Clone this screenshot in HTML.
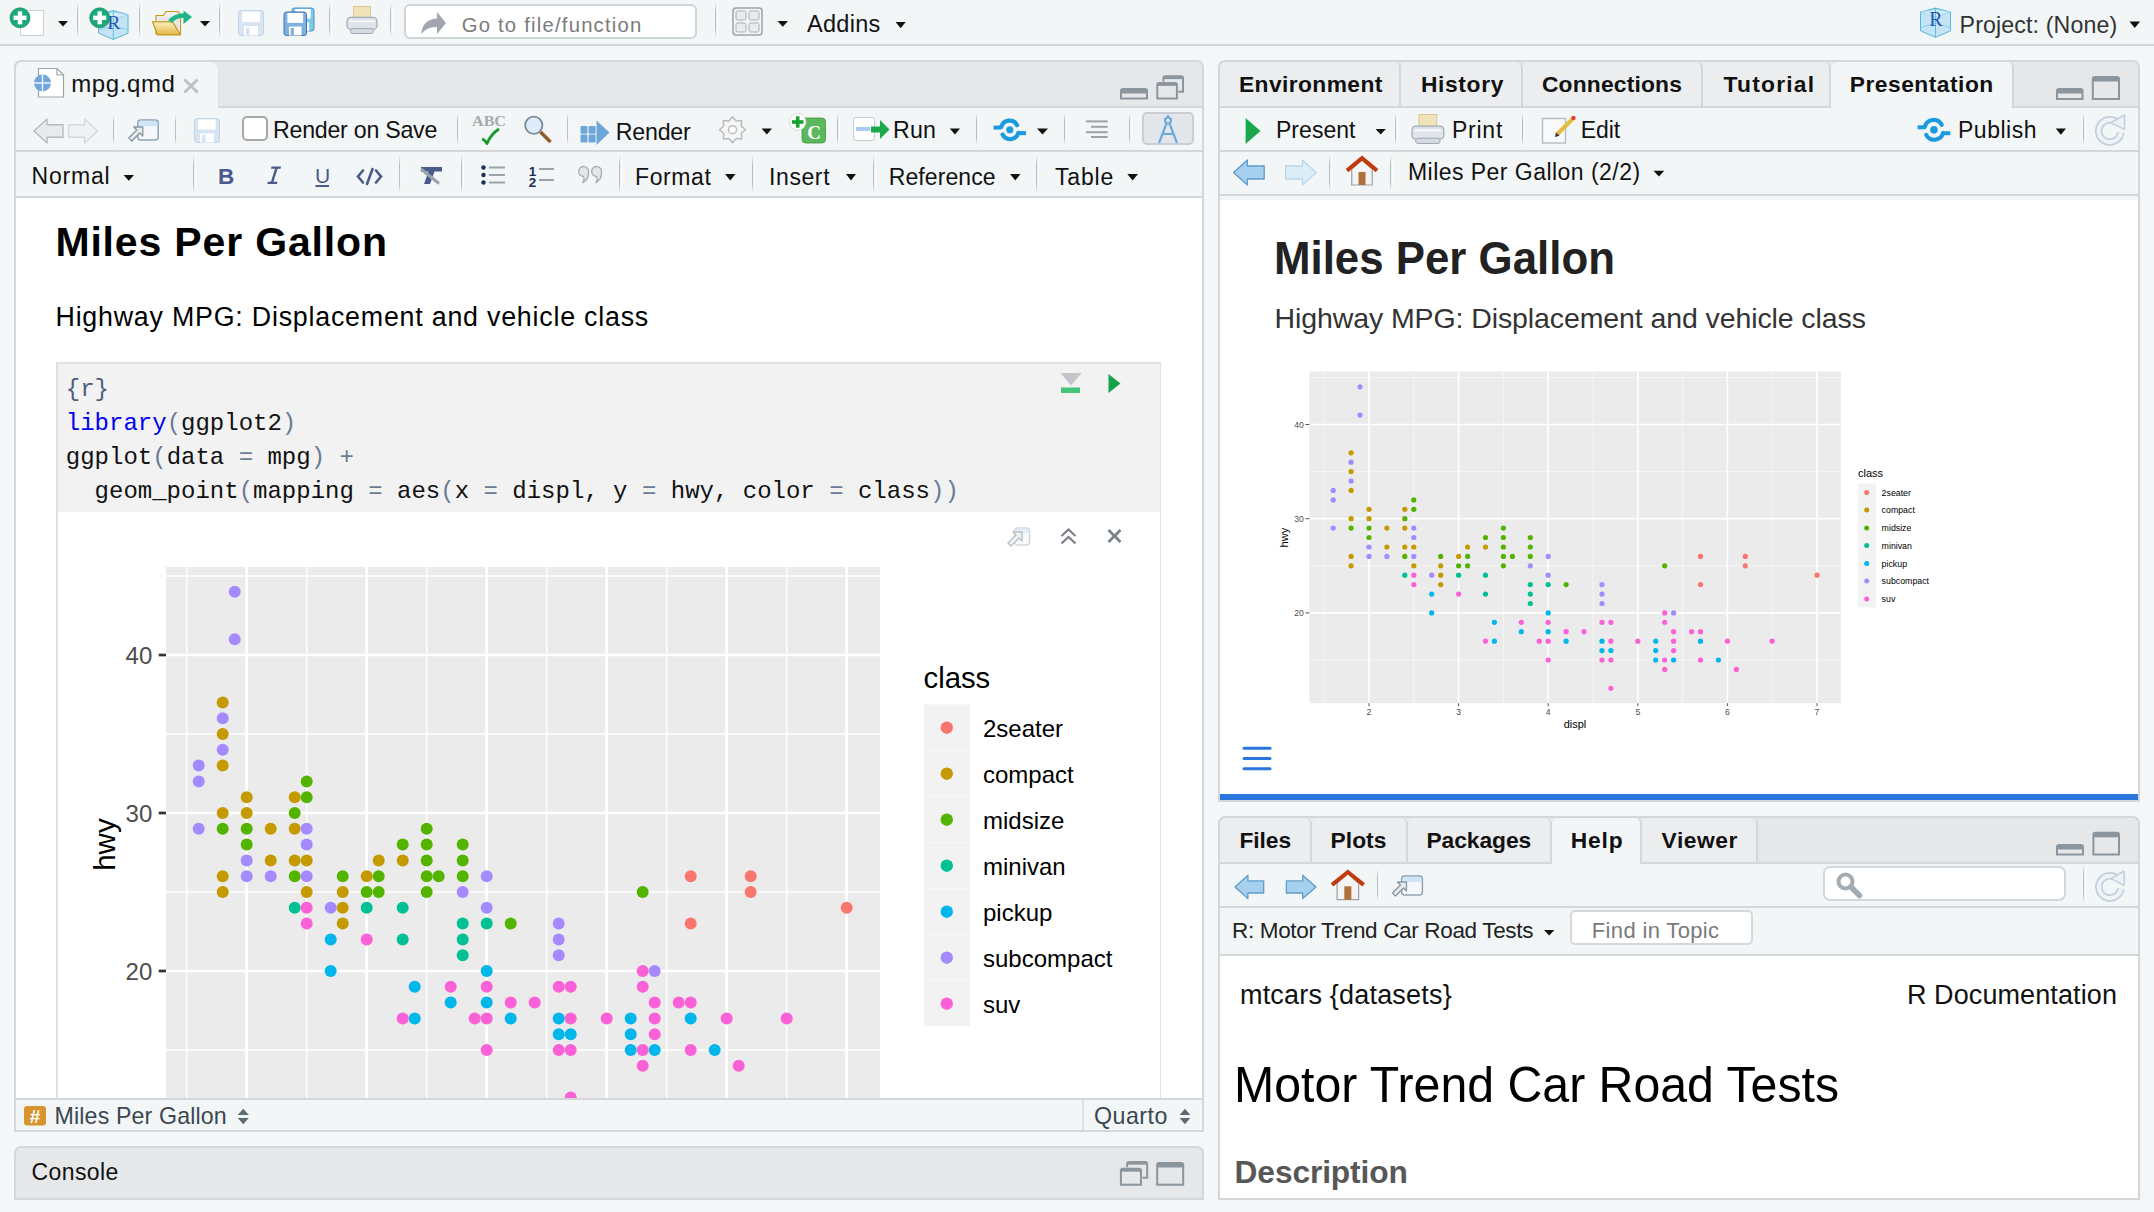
<!DOCTYPE html>
<html><head><meta charset="utf-8"><title>RStudio</title>
<style>
html,body{margin:0;padding:0;width:2154px;height:1212px;overflow:hidden;font-family:"Liberation Sans",sans-serif;}
</style></head><body>
<div style="position:absolute;left:0px;top:0px;width:2154px;height:1212px;background:#f5f6f8;"></div><div style="position:absolute;left:0px;top:0px;width:2154px;height:44px;background:#f3f6f7;"></div><div style="position:absolute;left:0px;top:44px;width:2154px;height:2px;background:#d3d7da;"></div><div style="position:absolute;left:14px;top:60px;width:1186px;height:1068px;border:2px solid #d3d7da;border-radius:7px 7px 0 0;background:#e5e7e9;overflow:hidden"></div><div style="position:absolute;left:16px;top:108px;width:1186px;height:42px;background:#f3f6f7;"></div><div style="position:absolute;left:16px;top:150px;width:1186px;height:2px;background:#d3d7da;"></div><div style="position:absolute;left:16px;top:152px;width:1186px;height:44px;background:#f3f6f7;"></div><div style="position:absolute;left:16px;top:196px;width:1186px;height:2px;background:#d3d7da;"></div><div style="position:absolute;left:16px;top:198px;width:1186px;height:900px;background:#fff;"></div><div style="position:absolute;left:16px;top:1098px;width:1186px;height:2px;background:#d3d7da;"></div><div style="position:absolute;left:16px;top:1100px;width:1186px;height:30px;background:#f3f6f7;"></div><div style="position:absolute;left:1082px;top:1100px;width:2px;height:30px;background:#dde1e4;"></div><div style="position:absolute;left:218px;top:106px;width:984px;height:2px;background:#d3d7da;"></div><div style="position:absolute;left:16px;top:62px;width:202px;height:46px;background:#f3f6f7;border-radius:6px 7px 0 0;box-shadow:1px 0 0 #dde0e3"></div><div style="position:absolute;left:14px;top:1146px;width:1186px;height:50px;border:2px solid #d3d7da;border-radius:7px 7px 0 0;background:#e5e7e9;overflow:hidden"></div><div style="position:absolute;left:1218px;top:60px;width:918px;height:738px;border:2px solid #d3d7da;border-radius:7px 7px 0 0;background:#e5e7e9;overflow:hidden"></div><div style="position:absolute;left:1220px;top:108px;width:918px;height:42px;background:#f3f6f7;"></div><div style="position:absolute;left:1220px;top:150px;width:918px;height:2px;background:#d3d7da;"></div><div style="position:absolute;left:1220px;top:152px;width:918px;height:42px;background:#f3f6f7;"></div><div style="position:absolute;left:1220px;top:194px;width:918px;height:2px;background:#d3d7da;"></div><div style="position:absolute;left:1220px;top:196px;width:918px;height:4px;background:#f3f6f7;"></div><div style="position:absolute;left:1220px;top:200px;width:918px;height:594px;background:#fff;"></div><div style="position:absolute;left:1220px;top:794px;width:918px;height:6px;background:#2b76dc;"></div><div style="position:absolute;left:1220px;top:106px;width:918px;height:2px;background:#d3d7da;"></div><div style="position:absolute;left:1220px;top:62px;width:179px;height:44px;background:#ebedef;border-right:2px solid #d3d7da;border-radius:6px 6px 0 0"></div><div style="position:absolute;left:1401px;top:62px;width:120px;height:44px;background:#ebedef;border-right:2px solid #d3d7da;border-radius:6px 6px 0 0"></div><div style="position:absolute;left:1523px;top:62px;width:178px;height:44px;background:#ebedef;border-right:2px solid #d3d7da;border-radius:6px 6px 0 0"></div><div style="position:absolute;left:1703px;top:62px;width:126px;height:44px;background:#ebedef;border-right:2px solid #d3d7da;border-radius:6px 6px 0 0"></div><div style="position:absolute;left:1831px;top:62px;width:181px;height:46px;background:#f3f6f7;border-right:2px solid #d3d7da;border-radius:6px 6px 0 0"></div><div style="position:absolute;left:1218px;top:816px;width:918px;height:380px;border:2px solid #d3d7da;border-radius:7px 7px 0 0;background:#e5e7e9;overflow:hidden"></div><div style="position:absolute;left:1220px;top:864px;width:918px;height:42px;background:#f3f6f7;"></div><div style="position:absolute;left:1220px;top:906px;width:918px;height:2px;background:#d3d7da;"></div><div style="position:absolute;left:1220px;top:908px;width:918px;height:46px;background:#f3f6f7;"></div><div style="position:absolute;left:1220px;top:954px;width:918px;height:2px;background:#d3d7da;"></div><div style="position:absolute;left:1220px;top:956px;width:918px;height:242px;background:#fff;"></div><div style="position:absolute;left:1220px;top:862px;width:918px;height:2px;background:#d3d7da;"></div><div style="position:absolute;left:1220px;top:818px;width:90px;height:44px;background:#ebedef;border-right:2px solid #d3d7da;border-radius:6px 6px 0 0"></div><div style="position:absolute;left:1312px;top:818px;width:94px;height:44px;background:#ebedef;border-right:2px solid #d3d7da;border-radius:6px 6px 0 0"></div><div style="position:absolute;left:1408px;top:818px;width:142px;height:44px;background:#ebedef;border-right:2px solid #d3d7da;border-radius:6px 6px 0 0"></div><div style="position:absolute;left:1552px;top:818px;width:88px;height:46px;background:#f3f6f7;border-right:2px solid #d3d7da;border-radius:6px 6px 0 0"></div><div style="position:absolute;left:1642px;top:818px;width:114px;height:44px;background:#ebedef;border-right:2px solid #d3d7da;border-radius:6px 6px 0 0"></div><div style="position:absolute;left:404px;top:4px;width:289px;height:31px;background:#fff;border:2px solid #cfd4d8;border-radius:6px"></div><div style="position:absolute;left:1570px;top:910px;width:179px;height:31px;background:#fff;border:2px solid #d3d8dc;border-radius:5px"></div><div style="position:absolute;left:1823px;top:866px;width:239px;height:31px;background:#fff;border:2px solid #d3d8dc;border-radius:7px"></div><div style="position:absolute;left:242px;top:116px;width:22px;height:21px;background:#fff;border:2px solid #a8a8a8;border-radius:5px"></div><div style="position:absolute;left:1142px;top:112px;width:48px;height:29px;background:#e3e7eb;border:2px solid #c8ced4;border-radius:5px"></div><div style="position:absolute;left:56px;top:362px;width:1105px;height:2px;background:#e2e2e2;"></div><div style="position:absolute;left:56px;top:364px;width:1105px;height:148px;background:#f2f2f2;"></div><div style="position:absolute;left:56px;top:362px;width:1.5px;height:736px;background:#e0e0e0;"></div><div style="position:absolute;left:1160px;top:364px;width:1px;height:734px;background:#e3e3e3;"></div>
<svg style="position:absolute;left:0;top:0" width="2154" height="1212" viewBox="0 0 2154 1212" font-family="Liberation Sans">
<defs><linearGradient id="sg" x1="0" y1="0" x2="0" y2="1"><stop offset="0" stop-color="#b9bdc1" stop-opacity="0"/><stop offset="0.25" stop-color="#b9bdc1"/><stop offset="0.75" stop-color="#b9bdc1"/><stop offset="1" stop-color="#b9bdc1" stop-opacity="0"/></linearGradient><linearGradient id="sw" x1="0" y1="0" x2="0" y2="1"><stop offset="0" stop-color="#fff" stop-opacity="0"/><stop offset="0.25" stop-color="#fff"/><stop offset="0.75" stop-color="#fff"/><stop offset="1" stop-color="#fff" stop-opacity="0"/></linearGradient></defs><rect x="20.5" y="10.5" width="23" height="25" fill="#fff" stroke="#c9d0d6" stroke-width="1"/><circle cx="20" cy="17.8" r="10" fill="#1aa978" stroke="#12865c" stroke-width="0.7"/><rect x="13.5" y="15.600000000000001" width="13" height="4.4" fill="#fff"/><rect x="17.8" y="11.3" width="4.4" height="13" fill="#fff"/><polygon points="58,21 68,21 63.0,26.5" fill="#111"/><rect x="77" y="3" width="1.4" height="34" fill="url(#sg)"/><rect x="78.4" y="3" width="1.2" height="34" fill="url(#sw)"/><polygon points="113.3,10.6 128,14.646 128,33.141999999999996 113.3,39.5 98.6,33.141999999999996 98.6,14.646" fill="#c4e4f6" stroke="#58b6d8" stroke-width="1"/><polygon points="98.6,14.646 113.3,12.045 128,14.646 113.3,19.27" fill="#d5ecf9" stroke="#8fd0ea" stroke-width="0.7"/><polyline points="98.6,29.963 113.3,25.628 128,29.963" fill="none" stroke="#7cc6e4" stroke-width="0.8"/><line x1="113.3" y1="10.6" x2="113.3" y2="39.5" stroke="#58b6d8" stroke-width="0.9"/><text x="113.8" y="28.807000000000002" font-family="Liberation Serif" font-size="19.652" fill="#2457b0" text-anchor="middle">R</text><circle cx="99.7" cy="17.8" r="10" fill="#1aa978" stroke="#12865c" stroke-width="0.7"/><rect x="93.2" y="15.600000000000001" width="13" height="4.4" fill="#fff"/><rect x="97.5" y="11.3" width="4.4" height="13" fill="#fff"/><rect x="139" y="3" width="1.4" height="34" fill="url(#sg)"/><rect x="140.4" y="3" width="1.2" height="34" fill="url(#sw)"/><defs><linearGradient id="fg" x1="0" y1="0" x2="0" y2="1"><stop offset="0" stop-color="#fbf3c4"/><stop offset="1" stop-color="#e2b646"/></linearGradient></defs><path d="M 156 15.5 L 163.5 15.5 L 166 11.5 L 178 11.5 L 180.5 14.5 L 180.5 34 L 156 34 Z" fill="#f0f0f0" stroke="#c99a1c" stroke-width="1.2"/><rect x="158" y="16.5" width="21" height="12" fill="#e6e6e6"/><polygon points="152.5,21.8 172.5,21.8 180.5,34.8 157.5,34.8" fill="url(#fg)" stroke="#c49818" stroke-width="1.2" stroke-linejoin="round"/><path d="M 170 21.5 Q 175 15.5 184 15.5" fill="none" stroke="#1db58a" stroke-width="4.5"/><polygon points="183.5,10.5 192,17 183.5,24" fill="#1db58a"/><polygon points="200,21 210,21 205.0,26.5" fill="#111"/><rect x="219" y="3" width="1.4" height="34" fill="url(#sg)"/><rect x="220.4" y="3" width="1.2" height="34" fill="url(#sw)"/><rect x="238.5" y="10.5" width="25.0" height="25.0" rx="2.5" fill="#d7e5f3" stroke="#c2d5e8" stroke-width="1"/><rect x="242.25" y="11.5" width="17.5" height="10.5" fill="#fff"/><rect x="244.0" y="26.0" width="14.000000000000002" height="9.5" fill="#fff"/><rect x="246.0" y="27.5" width="3.5000000000000004" height="7.5" fill="#d7e5f3"/><rect x="292" y="8" width="22" height="23" rx="2.5" fill="#7ec8ea" stroke="#4a8fc0" stroke-width="1"/><rect x="295.3" y="9" width="15.399999999999999" height="9.66" fill="#fff"/><rect x="296.84" y="22.259999999999998" width="12.32" height="8.74" fill="#fff"/><rect x="298.6" y="23.64" width="3.08" height="6.8999999999999995" fill="#7ec8ea"/><rect x="284" y="12" width="22.5" height="23.5" rx="2.5" fill="#7fb0e0" stroke="#3f75b0" stroke-width="1"/><rect x="287.375" y="13" width="15.749999999999998" height="9.87" fill="#fff"/><rect x="288.95" y="26.57" width="12.600000000000001" height="8.93" fill="#fff"/><rect x="290.75" y="27.98" width="3.1500000000000004" height="7.05" fill="#7fb0e0"/><rect x="329" y="3" width="1.4" height="34" fill="url(#sg)"/><rect x="330.4" y="3" width="1.2" height="34" fill="url(#sw)"/><rect x="353.6" y="6.5" width="16.8" height="13.5" fill="#f1e3b8" stroke="#d8c89a" stroke-width="1"/><rect x="347" y="17.3" width="30" height="12.15" rx="4" fill="#dfe3ea" stroke="#a2a9b2" stroke-width="1.2"/><rect x="350.6" y="28.639999999999997" width="22.8" height="4.859999999999999" rx="2" fill="#d5dae2" stroke="#a2a9b2" stroke-width="1"/><line x1="349.4" y1="21.35" x2="374.6" y2="21.35" stroke="#fff" stroke-width="1.5"/><rect x="390" y="3" width="1.4" height="34" fill="url(#sg)"/><rect x="391.4" y="3" width="1.2" height="34" fill="url(#sw)"/><path d="M 421 34 Q 423 19 437 18.5 L 437 12 L 446 23 L 437 34 L 437 27 Q 428 26 421 34 Z" fill="#9fa6b0"/><rect x="715" y="3" width="1.4" height="34" fill="url(#sg)"/><rect x="716.4" y="3" width="1.2" height="34" fill="url(#sw)"/><rect x="733" y="8" width="29" height="27" rx="3" fill="#f3f4f6" stroke="#9aa3ad" stroke-width="1.5"/><rect x="736" y="11" width="10" height="9" rx="1.5" fill="#e8eaed" stroke="#a8b0b8" stroke-width="1"/><rect x="749" y="11" width="10" height="9" rx="1.5" fill="#e8eaed" stroke="#a8b0b8" stroke-width="1"/><rect x="736" y="23" width="10" height="9" rx="1.5" fill="#e8eaed" stroke="#a8b0b8" stroke-width="1"/><rect x="749" y="23" width="10" height="9" rx="1.5" fill="#e8eaed" stroke="#a8b0b8" stroke-width="1"/><polygon points="777.5,21 788,21 782.75,26.7" fill="#111"/><polygon points="895.6,22 905.7,22 900.6500000000001,28.3" fill="#111"/><polygon points="1935.5,8 1950.5,12.102 1950.5,30.854 1935.5,37.3 1920.5,30.854 1920.5,12.102" fill="#c4e4f6" stroke="#58b6d8" stroke-width="1"/><polygon points="1920.5,12.102 1935.5,9.465 1950.5,12.102 1935.5,16.79" fill="#d5ecf9" stroke="#8fd0ea" stroke-width="0.7"/><polyline points="1920.5,27.631 1935.5,23.235999999999997 1950.5,27.631" fill="none" stroke="#7cc6e4" stroke-width="0.8"/><line x1="1935.5" y1="8" x2="1935.5" y2="37.3" stroke="#58b6d8" stroke-width="0.9"/><text x="1936.0" y="26.459" font-family="Liberation Serif" font-size="19.924" fill="#2457b0" text-anchor="middle">R</text><polygon points="2129.5,21.5 2140,21.5 2134.75,28" fill="#111"/><path d="M 38.5 68.5 L 57 68.5 L 63.5 75 L 63.5 97 L 38.5 97 Z" fill="#fff" stroke="#9da3a8" stroke-width="1.2"/><path d="M 57 68.5 L 57 75 L 63.5 75" fill="none" stroke="#9da3a8" stroke-width="1.2"/><circle cx="42.5" cy="83" r="8.5" fill="#6fa7dc"/><line x1="34" y1="83" x2="51" y2="83" stroke="#fff" stroke-width="1.3"/><line x1="42.5" y1="74.5" x2="42.5" y2="91.5" stroke="#fff" stroke-width="1.3"/><g stroke="#bfc1c3" stroke-width="3" stroke-linecap="square"><line x1="185.5" y1="80.5" x2="196.5" y2="91.5"/><line x1="196.5" y1="80.5" x2="185.5" y2="91.5"/></g><path d="M 1120 99.5 L 1120 91 Q 1120 88 1123 88 L 1145 88 Q 1148 88 1148 91 L 1148 99.5 Z" fill="#8b959d"/><rect x="1122" y="93.5" width="24" height="4.0" fill="#e5e7e9"/><path d="M 1162.394 92.724 L 1162.394 78.3 Q 1162.394 75.3 1165.394 75.3 L 1181 75.3 Q 1184 75.3 1184 78.3 L 1184 92.724 Z" fill="#8b959d"/><rect x="1164.394" y="79.1" width="17.605999999999995" height="11.624000000000006" fill="#e5e7e9"/><rect x="1155.8" y="81.576" width="22.606000000000037" height="17.924000000000003" fill="#e5e7e9"/><path d="M 1156.3 99.5 L 1156.3 85.076 Q 1156.3 82.076 1159.3 82.076 L 1174.906 82.076 Q 1177.906 82.076 1177.906 85.076 L 1177.906 99.5 Z" fill="#8b959d"/><rect x="1158.3" y="85.87599999999999" width="17.605999999999995" height="11.624000000000006" fill="#e5e7e9"/><polygon points="34,131.0 47.05,119 47.05,124.76 63,124.76 63,137.24 47.05,137.24 47.05,143" fill="#e9eaec" stroke="#b5b8bc" stroke-width="1.3" stroke-linejoin="round"/><polygon points="97.6,131.0 84.595,119 84.595,124.76 68.7,124.76 68.7,137.24 84.595,137.24 84.595,143" fill="#eff1f3" stroke="#d5d8dc" stroke-width="1.3" stroke-linejoin="round"/><rect x="113" y="115" width="1.4" height="30" fill="url(#sg)"/><rect x="114.4" y="115" width="1.2" height="30" fill="url(#sw)"/><g opacity="1.0"><rect x="137.8" y="120" width="20.400000000000002" height="20" rx="3" fill="#f5f8fb" stroke="#8fa3b5" stroke-width="1.5"/><rect x="138.60000000000002" y="120.8" width="18.8" height="5.5" rx="2" fill="#cfe4f7"/><polygon points="128.8,138 136.8,130 133.8,127 142.8,127 142.8,136 139.8,133 131.8,141" fill="#e8eaec" stroke="#8a96a0" stroke-width="1.3" stroke-linejoin="round"/></g><rect x="175" y="115" width="1.4" height="30" fill="url(#sg)"/><rect x="176.4" y="115" width="1.2" height="30" fill="url(#sw)"/><rect x="194.5" y="118.5" width="25.0" height="24.0" rx="2.5" fill="#d7e5f3" stroke="#c2d5e8" stroke-width="1"/><rect x="198.25" y="119.5" width="17.5" height="10.08" fill="#fff"/><rect x="200.0" y="133.38" width="14.000000000000002" height="9.120000000000001" fill="#fff"/><rect x="202.0" y="134.82" width="3.5000000000000004" height="7.199999999999999" fill="#d7e5f3"/><rect x="457" y="113" width="1.4" height="32" fill="url(#sg)"/><rect x="458.4" y="113" width="1.2" height="32" fill="url(#sw)"/><text x="472" y="126" font-family="Liberation Serif" font-weight="700" font-size="15" fill="#a5aab0" textLength="34" lengthAdjust="spacingAndGlyphs">ABC</text><path d="M 482 139 Q 484.5 139.5 487 143.5 Q 491 134 499 129" fill="none" stroke="#129a2e" stroke-width="2.8" stroke-linejoin="round"/><circle cx="533.8" cy="125.3" r="8.6" fill="#dcecfb" stroke="#7b8b98" stroke-width="1.8"/><line x1="540.5" y1="132" x2="550.5" y2="142" stroke="#8f5a26" stroke-width="3.6" stroke-linecap="butt"/><rect x="567" y="113" width="1.4" height="32" fill="url(#sg)"/><rect x="568.4" y="113" width="1.2" height="32" fill="url(#sw)"/><rect x="580.5" y="126" width="7" height="7.8" rx="1.2" fill="#6fa6da"/><rect x="588.6" y="126" width="7" height="7.8" rx="1.2" fill="#6fa6da"/><rect x="580.5" y="134.6" width="7" height="7.8" rx="1.2" fill="#6fa6da"/><rect x="588.6" y="134.6" width="7" height="7.8" rx="1.2" fill="#6fa6da"/><polygon points="596.5,120.5 609.5,132.5 596.5,145" fill="#6fa6da"/><polygon points="745.5,129.7 741.3,133.3 741.7,138.9 736.1,138.5 732.5,142.7 728.9,138.5 723.3,138.9 723.7,133.3 719.5,129.7 723.7,126.1 723.3,120.5 728.9,120.9 732.5,116.7 736.1,120.9 741.7,120.5 741.3,126.1" fill="#f6f6f6" stroke="#b9bcbf" stroke-width="1.5" stroke-linejoin="round"/><circle cx="732.5" cy="129.7" r="4" fill="#fff" stroke="#b9bcbf" stroke-width="1.5"/><polygon points="761.6,128.5 772,128.5 766.8,134.6" fill="#111"/><rect x="802" y="118" width="23.5" height="25" rx="3.5" fill="#5cb85c" stroke="#3e9a3e" stroke-width="0.8"/><text x="814" y="139" font-family="Liberation Serif" font-size="19" font-weight="700" fill="#fff" text-anchor="middle">C</text><circle cx="797.7" cy="122" r="8.3" fill="#fff" stroke="#d0d0d0" stroke-width="0.8"/><rect x="792" y="120.2" width="11.4" height="3.6" fill="#16a32a"/><rect x="795.9" y="116.3" width="3.6" height="11.4" fill="#16a32a"/><rect x="837" y="113" width="1.4" height="32" fill="url(#sg)"/><rect x="838.4" y="113" width="1.2" height="32" fill="url(#sw)"/><rect x="853.5" y="117.5" width="21" height="23" rx="2.5" fill="#fff" stroke="#c8ccd0" stroke-width="1"/><rect x="856" y="127" width="14" height="4" fill="#a9c9ee"/><rect x="871" y="126.5" width="10" height="6" fill="#1ba94c"/><polygon points="880,120 889.5,129.5 880,139" fill="#1ba94c"/><polygon points="949.8,128.5 960,128.5 954.9,134.6" fill="#111"/><rect x="976" y="113" width="1.4" height="32" fill="url(#sg)"/><rect x="977.4" y="113" width="1.2" height="32" fill="url(#sw)"/><circle cx="1009.8" cy="129.85" r="3.583439999999998" fill="#1a9be0"/><path d="M 1001.2679999999999 126.8638 A 8.531999999999996 8.531999999999996 0 0 1 1017.0522 125.1574" fill="none" stroke="#1a9be0" stroke-width="4.2" stroke-linecap="round"/><path d="M 1018.332 132.8362 A 8.531999999999996 8.531999999999996 0 0 1 1002.5477999999999 134.5426" fill="none" stroke="#1a9be0" stroke-width="4.2" stroke-linecap="round"/><rect x="993.6" y="125.584" width="7.678799999999997" height="4" fill="#1a9be0"/><rect x="1018.3212" y="131.1298" width="7.678799999999997" height="4" fill="#1a9be0"/><polygon points="1037,128.5 1048,128.5 1042.5,134.6" fill="#111"/><rect x="1064" y="113" width="1.4" height="32" fill="url(#sg)"/><rect x="1065.4" y="113" width="1.2" height="32" fill="url(#sw)"/><line x1="1086" y1="121.4" x2="1107.7" y2="121.4" stroke="#9ca2a8" stroke-width="2"/><line x1="1091" y1="126.8" x2="1107.7" y2="126.8" stroke="#9ca2a8" stroke-width="2"/><line x1="1086" y1="132.2" x2="1107.7" y2="132.2" stroke="#9ca2a8" stroke-width="2"/><line x1="1091" y1="137.0" x2="1107.7" y2="137.0" stroke="#9ca2a8" stroke-width="2"/><rect x="1129" y="113" width="1.4" height="32" fill="url(#sg)"/><rect x="1130.4" y="113" width="1.2" height="32" fill="url(#sw)"/><g stroke="#6fa8dc" stroke-width="2.2" fill="none"><circle cx="1168" cy="120.5" r="3"/><line x1="1166.5" y1="123.5" x2="1159" y2="143"/><line x1="1169.5" y1="123.5" x2="1177" y2="143"/><line x1="1163" y1="134" x2="1173" y2="134"/><line x1="1168" y1="115" x2="1168" y2="117.5"/></g><polygon points="123.6,175 134,175 128.8,180.7" fill="#111"/><rect x="193" y="155" width="1.4" height="38" fill="url(#sg)"/><rect x="194.4" y="155" width="1.2" height="38" fill="url(#sw)"/><text x="218" y="183.7" font-family="Liberation Sans" font-weight="700" font-size="22.5" fill="#4a5a8a">B</text><g fill="#4a5a8a"><polygon points="271.5,166.5 281,166.5 280.6,168.8 271,168.8"/><polygon points="267.8,181.8 277.4,181.8 277,184 267.4,184"/><polygon points="275.3,168 277.8,168 273.2,182.6 270.7,182.6"/></g><text x="315" y="182.5" font-family="Liberation Sans" font-size="21" fill="#4a5a8a">U</text><rect x="315.5" y="185" width="13.5" height="2" fill="#4a5a8a"/><g stroke="#4a5a8a" stroke-width="2.6" fill="none" stroke-linecap="round"><polyline points="363,170.5 358,176.5 363,182.5"/><polyline points="376,170.5 381,176.5 376,182.5"/><line x1="372.5" y1="169" x2="367" y2="184"/></g><rect x="399" y="155" width="1.4" height="38" fill="url(#sg)"/><rect x="400.4" y="155" width="1.2" height="38" fill="url(#sw)"/><polygon points="421,167 442,167 442,171.5 434.5,171.5 430,184 424,184 428.5,171.5 421,171.5" fill="#4a5a8a"/><line x1="421" y1="169" x2="439" y2="183.5" stroke="#9aa3ab" stroke-width="3"/><rect x="461" y="155" width="1.4" height="38" fill="url(#sg)"/><rect x="462.4" y="155" width="1.2" height="38" fill="url(#sw)"/><circle cx="483.5" cy="167.5" r="2.2" fill="#1d2d5a"/><line x1="489" y1="167.5" x2="505" y2="167.5" stroke="#9aa3ab" stroke-width="2"/><circle cx="483.5" cy="175" r="2.2" fill="#1d2d5a"/><line x1="489" y1="175" x2="505" y2="175" stroke="#9aa3ab" stroke-width="2"/><circle cx="483.5" cy="182.5" r="2.2" fill="#1d2d5a"/><line x1="489" y1="182.5" x2="505" y2="182.5" stroke="#9aa3ab" stroke-width="2"/><text x="532.5" y="176" font-family="Liberation Sans" font-weight="700" font-size="13.5" fill="#1d2d5a" text-anchor="middle">1</text><text x="532.5" y="186.5" font-family="Liberation Sans" font-weight="700" font-size="13.5" fill="#1d2d5a" text-anchor="middle">2</text><line x1="539" y1="169" x2="554" y2="169" stroke="#9aa3ab" stroke-width="2"/><line x1="539" y1="180" x2="554" y2="180" stroke="#9aa3ab" stroke-width="2"/><path d="M 582.5 183 Q 589.0 179 588.5 172.5 A 5 5 0 1 0 583.5 176.5 Q 585.0 180 582.5 183 Z" fill="#e3e6e9" stroke="#a5acb2" stroke-width="1.3"/><path d="M 595.5 183 Q 602.0 179 601.5 172.5 A 5 5 0 1 0 596.5 176.5 Q 598.0 180 595.5 183 Z" fill="#e3e6e9" stroke="#a5acb2" stroke-width="1.3"/><rect x="619" y="155" width="1.4" height="38" fill="url(#sg)"/><rect x="620.4" y="155" width="1.2" height="38" fill="url(#sw)"/><polygon points="725,174 735.5,174 730.25,180.5" fill="#111"/><rect x="752" y="155" width="1.4" height="38" fill="url(#sg)"/><rect x="753.4" y="155" width="1.2" height="38" fill="url(#sw)"/><polygon points="846,174 856,174 851.0,180.5" fill="#111"/><rect x="873" y="155" width="1.4" height="38" fill="url(#sg)"/><rect x="874.4" y="155" width="1.2" height="38" fill="url(#sw)"/><polygon points="1010,174 1020.5,174 1015.25,180.5" fill="#111"/><rect x="1036" y="155" width="1.4" height="38" fill="url(#sg)"/><rect x="1037.4" y="155" width="1.2" height="38" fill="url(#sw)"/><polygon points="1127.3,174 1138,174 1132.65,180.5" fill="#111"/><text x="65.8" y="395.8" font-family="Liberation Mono" font-size="24" xml:space="preserve"><tspan fill="#4b5f7e">{r}</tspan></text><text x="65.8" y="429.8" font-family="Liberation Mono" font-size="24" xml:space="preserve"><tspan fill="#0000ee">library</tspan><tspan fill="#6a7b95">(</tspan><tspan fill="#111">ggplot2</tspan><tspan fill="#6a7b95">)</tspan></text><text x="65.8" y="463.8" font-family="Liberation Mono" font-size="24" xml:space="preserve"><tspan fill="#111">ggplot</tspan><tspan fill="#6a7b95">(</tspan><tspan fill="#111">data </tspan><tspan fill="#6a7b95">=</tspan><tspan fill="#111"> mpg</tspan><tspan fill="#6a7b95">)</tspan><tspan fill="#6a7b95"> +</tspan></text><text x="65.8" y="497.8" font-family="Liberation Mono" font-size="24" xml:space="preserve"><tspan fill="#111">  geom_point</tspan><tspan fill="#6a7b95">(</tspan><tspan fill="#111">mapping </tspan><tspan fill="#6a7b95">=</tspan><tspan fill="#111"> aes</tspan><tspan fill="#6a7b95">(</tspan><tspan fill="#111">x </tspan><tspan fill="#6a7b95">=</tspan><tspan fill="#111"> displ, y </tspan><tspan fill="#6a7b95">=</tspan><tspan fill="#111"> hwy, color </tspan><tspan fill="#6a7b95">=</tspan><tspan fill="#111"> class</tspan><tspan fill="#6a7b95">))</tspan></text><polygon points="1060.5,373 1081.5,373 1071,385.5" fill="#c2c6ca"/><rect x="1061" y="387.5" width="19" height="5.5" fill="#45c47a"/><polygon points="1108.5,374 1120.5,383.5 1108.5,393" fill="#16a34a"/><g opacity="0.6"><rect x="1014.6" y="528" width="14.96" height="17" rx="3" fill="#f5f8fb" stroke="#b5c0ca" stroke-width="1.5"/><rect x="1015.4" y="528.8" width="13.360000000000001" height="4.75" rx="2" fill="#cfe4f7"/><polygon points="1008,543 1016,535 1013,532 1022,532 1022,541 1019,538 1011,546" fill="#e8eaec" stroke="#8a96a0" stroke-width="1.3" stroke-linejoin="round"/></g><g stroke="#7b8088" stroke-width="2.2" fill="none"><polyline points="1061.5,536 1068.5,529.5 1075.5,536"/><polyline points="1061.5,543.5 1068.5,537 1075.5,543.5"/></g><g stroke="#7b8088" stroke-width="2.6"><line x1="1108.5" y1="530" x2="1120.5" y2="542"/><line x1="1120.5" y1="530" x2="1108.5" y2="542"/></g><rect x="24" y="1106" width="22" height="19.5" rx="3" fill="#d6952e"/><text x="35" y="1122.5" font-family="Liberation Sans" font-weight="700" font-size="19" fill="#fff" text-anchor="middle">#</text><polygon points="237.7,1115.0 248.8,1115.0 243.25,1108.8" fill="#5f6a72"/><polygon points="237.7,1118.0 248.8,1118.0 243.25,1124.2" fill="#5f6a72"/><polygon points="1179.6,1115.0 1190.3,1115.0 1184.9499999999998,1108.8" fill="#5f6a72"/><polygon points="1179.6,1118.0 1190.3,1118.0 1184.9499999999998,1124.2" fill="#5f6a72"/><path d="M 1126.126 1178.756 L 1126.126 1163.9 Q 1126.126 1160.9 1129.126 1160.9 L 1145.2 1160.9 Q 1148.2 1160.9 1148.2 1163.9 L 1148.2 1178.756 Z" fill="#8b959d"/><rect x="1128.126" y="1164.7" width="18.07400000000007" height="12.055999999999994" fill="#e5e7e9"/><rect x="1119.4" y="1167.344" width="23.073999999999966" height="18.355999999999966" fill="#e5e7e9"/><path d="M 1119.9 1185.7 L 1119.9 1170.844 Q 1119.9 1167.844 1122.9 1167.844 L 1138.9740000000002 1167.844 Q 1141.9740000000002 1167.844 1141.9740000000002 1170.844 L 1141.9740000000002 1185.7 Z" fill="#8b959d"/><rect x="1121.9" y="1171.644" width="18.07400000000007" height="12.055999999999994" fill="#e5e7e9"/><path d="M 1156.2 1185.7 L 1156.2 1165 Q 1156.2 1162 1159.2 1162 L 1181.2 1162 Q 1184.2 1162 1184.2 1165 L 1184.2 1185.7 Z" fill="#8b959d"/><rect x="1158.2" y="1167.5" width="24.0" height="16.200000000000045" fill="#e5e7e9"/><path d="M 2056 100 L 2056 91 Q 2056 88 2059 88 L 2080.5 88 Q 2083.5 88 2083.5 91 L 2083.5 100 Z" fill="#8b959d"/><rect x="2058" y="93.5" width="23.5" height="4.5" fill="#e5e7e9"/><path d="M 2091.8 100 L 2091.8 79 Q 2091.8 76 2094.8 76 L 2117 76 Q 2120 76 2120 79 L 2120 100 Z" fill="#8b959d"/><rect x="2093.8" y="81.5" width="24.199999999999818" height="16.5" fill="#e5e7e9"/><polygon points="1245.6,118 1260.5,131 1245.6,144" fill="#1aa64a"/><polygon points="1375.6,129 1385.8,129 1380.6999999999998,134.5" fill="#111"/><rect x="1395" y="113" width="1.4" height="32" fill="url(#sg)"/><rect x="1396.4" y="113" width="1.2" height="32" fill="url(#sw)"/><rect x="1418.996" y="114.5" width="17.807999999999975" height="14.5" fill="#f1e3b8" stroke="#d8c89a" stroke-width="1"/><rect x="1412" y="126.1" width="31.799999999999955" height="13.05" rx="4" fill="#dfe3ea" stroke="#a2a9b2" stroke-width="1.2"/><rect x="1415.816" y="138.28" width="24.167999999999967" height="5.22" rx="2" fill="#d5dae2" stroke="#a2a9b2" stroke-width="1"/><line x1="1414.544" y1="130.45" x2="1441.2559999999999" y2="130.45" stroke="#fff" stroke-width="1.5"/><rect x="1522" y="113" width="1.4" height="32" fill="url(#sg)"/><rect x="1523.4" y="113" width="1.2" height="32" fill="url(#sw)"/><rect x="1542.5" y="118.5" width="23" height="24.5" fill="#f8f9fb" stroke="#b5bcc4" stroke-width="1.4"/><line x1="1557" y1="134.5" x2="1573" y2="118.5" stroke="#e3bd3c" stroke-width="4"/><circle cx="1573.5" cy="118" r="2.2" fill="#e0403a"/><polygon points="1555,137 1556,132.5 1559.5,135.8" fill="#333"/><circle cx="1933.9499999999998" cy="129.85" r="3.8253599999999994" fill="#1a9be0"/><path d="M 1924.8419999999999 126.6622 A 9.107999999999999 9.107999999999999 0 0 1 1941.6917999999998 124.8406" fill="none" stroke="#1a9be0" stroke-width="4.2" stroke-linecap="round"/><path d="M 1943.0579999999998 133.0378 A 9.107999999999999 9.107999999999999 0 0 1 1926.2081999999998 134.8594" fill="none" stroke="#1a9be0" stroke-width="4.2" stroke-linecap="round"/><rect x="1917.6" y="125.29599999999999" width="8.197199999999999" height="4" fill="#1a9be0"/><rect x="1942.1028" y="131.2162" width="8.197199999999999" height="4" fill="#1a9be0"/><polygon points="2055.8,128.5 2066,128.5 2060.9,134.7" fill="#111"/><rect x="2083" y="113" width="1.4" height="32" fill="url(#sg)"/><rect x="2084.4" y="113" width="1.2" height="32" fill="url(#sw)"/><path d="M 2115.8379999999997 121.514 A 11.16 11.16 0 1 0 2120.8599999999997 132.674" fill="none" stroke="#c3cfdb" stroke-width="7.5"/><path d="M 2115.8379999999997 121.514 A 11.16 11.16 0 1 0 2120.8599999999997 132.674" fill="none" stroke="#eef3f8" stroke-width="4"/><polygon points="2110.816,122.63 2124.5,115 2124.5,129.326" fill="#eef3f8" stroke="#c3cfdb" stroke-width="1.5" stroke-linejoin="round"/><polygon points="1233.6,172.5 1247.37,160 1247.37,166.0 1264.2,166.0 1264.2,179.0 1247.37,179.0 1247.37,185" fill="#a6d0ee" stroke="#5d9ccc" stroke-width="1.3" stroke-linejoin="round"/><polygon points="1316.2,172.5 1302.43,160 1302.43,166.0 1285.6,166.0 1285.6,179.0 1302.43,179.0 1302.43,185" fill="#dcedf8" stroke="#b9d6ec" stroke-width="1.3" stroke-linejoin="round"/><rect x="1329" y="155" width="1.4" height="36" fill="url(#sg)"/><rect x="1330.4" y="155" width="1.2" height="36" fill="url(#sw)"/><polygon points="1351.76,169.16 1362.0,159.65599999999998 1372.24,169.16 1372.24,185 1351.76,185" fill="#f4f4f4" stroke="#9aa0a6" stroke-width="1.2"/><polyline points="1347,170.6 1362.0,158.2 1377,170.6" fill="none" stroke="#c23b0c" stroke-width="4" stroke-linejoin="miter"/><rect x="1358.5" y="172.04" width="7" height="12.960000000000006" fill="#b0703a"/><rect x="1390" y="155" width="1.4" height="36" fill="url(#sg)"/><rect x="1391.4" y="155" width="1.2" height="36" fill="url(#sw)"/><polygon points="1653.5,170.7 1664.3,170.7 1658.9,176.4" fill="#111"/><g stroke="#2a76dd" stroke-width="3" stroke-linecap="round"><line x1="1244" y1="748.2" x2="1270" y2="748.2"/><line x1="1244" y1="758.6" x2="1270" y2="758.6"/><line x1="1244" y1="768.7" x2="1270" y2="768.7"/></g><path d="M 2056 855.5 L 2056 847 Q 2056 844 2059 844 L 2081 844 Q 2084 844 2084 847 L 2084 855.5 Z" fill="#8b959d"/><rect x="2058" y="849.5" width="24" height="4.0" fill="#e5e7e9"/><path d="M 2092.4 855.5 L 2092.4 834.8 Q 2092.4 831.8 2095.4 831.8 L 2117 831.8 Q 2120 831.8 2120 834.8 L 2120 855.5 Z" fill="#8b959d"/><rect x="2094.4" y="837.3" width="23.59999999999991" height="16.200000000000045" fill="#e5e7e9"/><polygon points="1235,886.95 1247.915,875.3 1247.915,880.892 1263.7,880.892 1263.7,893.008 1247.915,893.008 1247.915,898.6" fill="#a6d0ee" stroke="#5d9ccc" stroke-width="1.3" stroke-linejoin="round"/><polygon points="1316,886.95 1302.68,875.3 1302.68,880.892 1286.4,880.892 1286.4,893.008 1302.68,893.008 1302.68,898.6" fill="#a6d0ee" stroke="#5d9ccc" stroke-width="1.3" stroke-linejoin="round"/><polygon points="1337.066,883.365 1347.85,873.564 1358.634,883.365 1358.634,899.7 1337.066,899.7" fill="#f4f4f4" stroke="#9aa0a6" stroke-width="1.2"/><polyline points="1332,884.85 1347.85,872 1363.7,884.85" fill="none" stroke="#c23b0c" stroke-width="4" stroke-linejoin="miter"/><rect x="1344.35" y="886.335" width="7" height="13.365000000000022" fill="#b0703a"/><rect x="1377" y="869" width="1.4" height="32" fill="url(#sg)"/><rect x="1378.4" y="869" width="1.2" height="32" fill="url(#sw)"/><g opacity="1.0"><rect x="1401.65" y="876" width="20.740000000000002" height="19" rx="3" fill="#f5f8fb" stroke="#8fa3b5" stroke-width="1.5"/><rect x="1402.45" y="876.8" width="19.14" height="5.25" rx="2" fill="#cfe4f7"/><polygon points="1392.5,893 1400.5,885 1397.5,882 1406.5,882 1406.5,891 1403.5,888 1395.5,896" fill="#e8eaec" stroke="#8a96a0" stroke-width="1.3" stroke-linejoin="round"/></g><circle cx="1845.5" cy="881.5" r="7" fill="none" stroke="#a3abb3" stroke-width="4"/><line x1="1851" y1="887" x2="1859.5" y2="895.5" stroke="#a3abb3" stroke-width="5.5" stroke-linecap="round"/><rect x="2083" y="865" width="1.4" height="38" fill="url(#sg)"/><rect x="2084.4" y="865" width="1.2" height="38" fill="url(#sw)"/><path d="M 2115.988 877.514 A 11.16 11.16 0 1 0 2121.0099999999998 888.674" fill="none" stroke="#c3cfdb" stroke-width="7.5"/><path d="M 2115.988 877.514 A 11.16 11.16 0 1 0 2121.0099999999998 888.674" fill="none" stroke="#eef3f8" stroke-width="4"/><polygon points="2110.966,878.63 2124.2,871 2124.2,885.326" fill="#eef3f8" stroke="#c3cfdb" stroke-width="1.5" stroke-linejoin="round"/><polygon points="1544,930 1554.4,930 1549.2,935.5" fill="#111"/><defs><clipPath id="cbig"><rect x="57" y="510" width="1103" height="588"/></clipPath></defs><g clip-path="url(#cbig)"><rect x="166" y="567" width="714" height="555.7" fill="#ebebeb"/><line x1="186.7" y1="567" x2="186.7" y2="1122.7" stroke="#fff" stroke-width="1.4"/><line x1="306.7" y1="567" x2="306.7" y2="1122.7" stroke="#fff" stroke-width="1.4"/><line x1="426.7" y1="567" x2="426.7" y2="1122.7" stroke="#fff" stroke-width="1.4"/><line x1="546.7" y1="567" x2="546.7" y2="1122.7" stroke="#fff" stroke-width="1.4"/><line x1="666.7" y1="567" x2="666.7" y2="1122.7" stroke="#fff" stroke-width="1.4"/><line x1="786.7" y1="567" x2="786.7" y2="1122.7" stroke="#fff" stroke-width="1.4"/><line x1="166" y1="1050.0" x2="880" y2="1050.0" stroke="#fff" stroke-width="1.4"/><line x1="166" y1="892.0" x2="880" y2="892.0" stroke="#fff" stroke-width="1.4"/><line x1="166" y1="734.0" x2="880" y2="734.0" stroke="#fff" stroke-width="1.4"/><line x1="166" y1="576.0" x2="880" y2="576.0" stroke="#fff" stroke-width="1.4"/><line x1="246.7" y1="567" x2="246.7" y2="1122.7" stroke="#fff" stroke-width="2.7"/><line x1="366.7" y1="567" x2="366.7" y2="1122.7" stroke="#fff" stroke-width="2.7"/><line x1="486.7" y1="567" x2="486.7" y2="1122.7" stroke="#fff" stroke-width="2.7"/><line x1="606.7" y1="567" x2="606.7" y2="1122.7" stroke="#fff" stroke-width="2.7"/><line x1="726.7" y1="567" x2="726.7" y2="1122.7" stroke="#fff" stroke-width="2.7"/><line x1="846.7" y1="567" x2="846.7" y2="1122.7" stroke="#fff" stroke-width="2.7"/><line x1="166" y1="971.0" x2="880" y2="971.0" stroke="#fff" stroke-width="2.7"/><line x1="158.7" y1="971.0" x2="166" y2="971.0" stroke="#333" stroke-width="2.7"/><text x="152.3" y="979.6" font-size="24" fill="#4d4d4d" text-anchor="end">20</text><line x1="166" y1="813.0" x2="880" y2="813.0" stroke="#fff" stroke-width="2.7"/><line x1="158.7" y1="813.0" x2="166" y2="813.0" stroke="#333" stroke-width="2.7"/><text x="152.3" y="821.6" font-size="24" fill="#4d4d4d" text-anchor="end">30</text><line x1="166" y1="655.0" x2="880" y2="655.0" stroke="#fff" stroke-width="2.7"/><line x1="158.7" y1="655.0" x2="166" y2="655.0" stroke="#333" stroke-width="2.7"/><text x="152.3" y="663.6" font-size="24" fill="#4d4d4d" text-anchor="end">40</text><circle cx="690.7" cy="876.2" r="6" fill="#F8766D"/><circle cx="690.7" cy="923.6" r="6" fill="#F8766D"/><circle cx="750.7" cy="876.2" r="6" fill="#F8766D"/><circle cx="750.7" cy="892.0" r="6" fill="#F8766D"/><circle cx="846.7" cy="907.8" r="6" fill="#F8766D"/><circle cx="222.7" cy="702.4" r="6" fill="#C49A00"/><circle cx="222.7" cy="734.0" r="6" fill="#C49A00"/><circle cx="222.7" cy="765.6" r="6" fill="#C49A00"/><circle cx="222.7" cy="813.0" r="6" fill="#C49A00"/><circle cx="222.7" cy="876.2" r="6" fill="#C49A00"/><circle cx="222.7" cy="892.0" r="6" fill="#C49A00"/><circle cx="246.7" cy="797.2" r="6" fill="#C49A00"/><circle cx="246.7" cy="813.0" r="6" fill="#C49A00"/><circle cx="270.7" cy="828.8" r="6" fill="#C49A00"/><circle cx="270.7" cy="860.4" r="6" fill="#C49A00"/><circle cx="294.7" cy="797.2" r="6" fill="#C49A00"/><circle cx="294.7" cy="828.8" r="6" fill="#C49A00"/><circle cx="294.7" cy="860.4" r="6" fill="#C49A00"/><circle cx="306.7" cy="860.4" r="6" fill="#C49A00"/><circle cx="306.7" cy="892.0" r="6" fill="#C49A00"/><circle cx="342.7" cy="892.0" r="6" fill="#C49A00"/><circle cx="342.7" cy="907.8" r="6" fill="#C49A00"/><circle cx="342.7" cy="923.6" r="6" fill="#C49A00"/><circle cx="366.7" cy="876.2" r="6" fill="#C49A00"/><circle cx="378.7" cy="860.4" r="6" fill="#C49A00"/><circle cx="402.7" cy="860.4" r="6" fill="#C49A00"/><circle cx="222.7" cy="828.8" r="6" fill="#53B400"/><circle cx="246.7" cy="828.8" r="6" fill="#53B400"/><circle cx="246.7" cy="844.6" r="6" fill="#53B400"/><circle cx="294.7" cy="813.0" r="6" fill="#53B400"/><circle cx="294.7" cy="876.2" r="6" fill="#53B400"/><circle cx="306.7" cy="781.4" r="6" fill="#53B400"/><circle cx="306.7" cy="797.2" r="6" fill="#53B400"/><circle cx="342.7" cy="876.2" r="6" fill="#53B400"/><circle cx="366.7" cy="892.0" r="6" fill="#53B400"/><circle cx="378.7" cy="876.2" r="6" fill="#53B400"/><circle cx="378.7" cy="892.0" r="6" fill="#53B400"/><circle cx="402.7" cy="844.6" r="6" fill="#53B400"/><circle cx="426.7" cy="828.8" r="6" fill="#53B400"/><circle cx="426.7" cy="844.6" r="6" fill="#53B400"/><circle cx="426.7" cy="860.4" r="6" fill="#53B400"/><circle cx="426.7" cy="876.2" r="6" fill="#53B400"/><circle cx="426.7" cy="892.0" r="6" fill="#53B400"/><circle cx="438.7" cy="876.2" r="6" fill="#53B400"/><circle cx="462.7" cy="844.6" r="6" fill="#53B400"/><circle cx="462.7" cy="860.4" r="6" fill="#53B400"/><circle cx="462.7" cy="876.2" r="6" fill="#53B400"/><circle cx="510.7" cy="923.6" r="6" fill="#53B400"/><circle cx="642.7" cy="892.0" r="6" fill="#53B400"/><circle cx="294.7" cy="907.8" r="6" fill="#00C094"/><circle cx="366.7" cy="907.8" r="6" fill="#00C094"/><circle cx="402.7" cy="907.8" r="6" fill="#00C094"/><circle cx="402.7" cy="939.4" r="6" fill="#00C094"/><circle cx="462.7" cy="923.6" r="6" fill="#00C094"/><circle cx="462.7" cy="939.4" r="6" fill="#00C094"/><circle cx="462.7" cy="955.2" r="6" fill="#00C094"/><circle cx="486.7" cy="923.6" r="6" fill="#00C094"/><circle cx="330.7" cy="939.4" r="6" fill="#00B6EB"/><circle cx="330.7" cy="971.0" r="6" fill="#00B6EB"/><circle cx="414.7" cy="986.8" r="6" fill="#00B6EB"/><circle cx="414.7" cy="1018.4" r="6" fill="#00B6EB"/><circle cx="450.7" cy="1002.6" r="6" fill="#00B6EB"/><circle cx="486.7" cy="971.0" r="6" fill="#00B6EB"/><circle cx="486.7" cy="1002.6" r="6" fill="#00B6EB"/><circle cx="510.7" cy="1018.4" r="6" fill="#00B6EB"/><circle cx="558.7" cy="1018.4" r="6" fill="#00B6EB"/><circle cx="558.7" cy="1034.2" r="6" fill="#00B6EB"/><circle cx="570.7" cy="1034.2" r="6" fill="#00B6EB"/><circle cx="630.7" cy="1018.4" r="6" fill="#00B6EB"/><circle cx="630.7" cy="1034.2" r="6" fill="#00B6EB"/><circle cx="630.7" cy="1050.0" r="6" fill="#00B6EB"/><circle cx="654.7" cy="1050.0" r="6" fill="#00B6EB"/><circle cx="690.7" cy="1018.4" r="6" fill="#00B6EB"/><circle cx="714.7" cy="1050.0" r="6" fill="#00B6EB"/><circle cx="198.7" cy="765.6" r="6" fill="#A58AFF"/><circle cx="198.7" cy="781.4" r="6" fill="#A58AFF"/><circle cx="198.7" cy="828.8" r="6" fill="#A58AFF"/><circle cx="234.7" cy="591.8" r="6" fill="#A58AFF"/><circle cx="234.7" cy="639.2" r="6" fill="#A58AFF"/><circle cx="222.7" cy="718.2" r="6" fill="#A58AFF"/><circle cx="222.7" cy="749.8" r="6" fill="#A58AFF"/><circle cx="246.7" cy="860.4" r="6" fill="#A58AFF"/><circle cx="246.7" cy="876.2" r="6" fill="#A58AFF"/><circle cx="270.7" cy="876.2" r="6" fill="#A58AFF"/><circle cx="306.7" cy="828.8" r="6" fill="#A58AFF"/><circle cx="306.7" cy="844.6" r="6" fill="#A58AFF"/><circle cx="306.7" cy="876.2" r="6" fill="#A58AFF"/><circle cx="330.7" cy="907.8" r="6" fill="#A58AFF"/><circle cx="462.7" cy="892.0" r="6" fill="#A58AFF"/><circle cx="486.7" cy="876.2" r="6" fill="#A58AFF"/><circle cx="486.7" cy="907.8" r="6" fill="#A58AFF"/><circle cx="558.7" cy="923.6" r="6" fill="#A58AFF"/><circle cx="558.7" cy="939.4" r="6" fill="#A58AFF"/><circle cx="558.7" cy="955.2" r="6" fill="#A58AFF"/><circle cx="654.7" cy="971.0" r="6" fill="#A58AFF"/><circle cx="306.7" cy="907.8" r="6" fill="#FB61D7"/><circle cx="306.7" cy="923.6" r="6" fill="#FB61D7"/><circle cx="366.7" cy="939.4" r="6" fill="#FB61D7"/><circle cx="402.7" cy="1018.4" r="6" fill="#FB61D7"/><circle cx="450.7" cy="986.8" r="6" fill="#FB61D7"/><circle cx="474.7" cy="1018.4" r="6" fill="#FB61D7"/><circle cx="486.7" cy="986.8" r="6" fill="#FB61D7"/><circle cx="486.7" cy="1018.4" r="6" fill="#FB61D7"/><circle cx="486.7" cy="1050.0" r="6" fill="#FB61D7"/><circle cx="510.7" cy="1002.6" r="6" fill="#FB61D7"/><circle cx="534.7" cy="1002.6" r="6" fill="#FB61D7"/><circle cx="558.7" cy="986.8" r="6" fill="#FB61D7"/><circle cx="558.7" cy="1050.0" r="6" fill="#FB61D7"/><circle cx="570.7" cy="986.8" r="6" fill="#FB61D7"/><circle cx="570.7" cy="1018.4" r="6" fill="#FB61D7"/><circle cx="570.7" cy="1050.0" r="6" fill="#FB61D7"/><circle cx="570.7" cy="1097.4" r="6" fill="#FB61D7"/><circle cx="606.7" cy="1018.4" r="6" fill="#FB61D7"/><circle cx="642.7" cy="971.0" r="6" fill="#FB61D7"/><circle cx="642.7" cy="986.8" r="6" fill="#FB61D7"/><circle cx="642.7" cy="1050.0" r="6" fill="#FB61D7"/><circle cx="642.7" cy="1065.8" r="6" fill="#FB61D7"/><circle cx="654.7" cy="1002.6" r="6" fill="#FB61D7"/><circle cx="654.7" cy="1018.4" r="6" fill="#FB61D7"/><circle cx="654.7" cy="1034.2" r="6" fill="#FB61D7"/><circle cx="678.7" cy="1002.6" r="6" fill="#FB61D7"/><circle cx="690.7" cy="1002.6" r="6" fill="#FB61D7"/><circle cx="690.7" cy="1050.0" r="6" fill="#FB61D7"/><circle cx="726.7" cy="1018.4" r="6" fill="#FB61D7"/><circle cx="738.7" cy="1065.8" r="6" fill="#FB61D7"/><circle cx="786.7" cy="1018.4" r="6" fill="#FB61D7"/></g><text transform="translate(114.5,844.6) rotate(-90)" font-size="29.5" fill="#000" text-anchor="middle">hwy</text><text x="923.5" y="687.7" font-size="29.3" fill="#000">class</text><rect x="924" y="704.4" width="46" height="45.5" fill="#f2f2f2"/><circle cx="946.8" cy="727.6999999999999" r="6.2" fill="#F8766D"/><text x="983" y="736.8" font-size="24" fill="#000">2seater</text><rect x="924" y="750.4" width="46" height="45.5" fill="#f2f2f2"/><circle cx="946.8" cy="773.6999999999999" r="6.2" fill="#C49A00"/><text x="983" y="782.8" font-size="24" fill="#000">compact</text><rect x="924" y="796.4" width="46" height="45.5" fill="#f2f2f2"/><circle cx="946.8" cy="819.6999999999999" r="6.2" fill="#53B400"/><text x="983" y="828.8" font-size="24" fill="#000">midsize</text><rect x="924" y="842.4" width="46" height="45.5" fill="#f2f2f2"/><circle cx="946.8" cy="865.6999999999999" r="6.2" fill="#00C094"/><text x="983" y="874.8" font-size="24" fill="#000">minivan</text><rect x="924" y="888.4" width="46" height="45.5" fill="#f2f2f2"/><circle cx="946.8" cy="911.6999999999999" r="6.2" fill="#00B6EB"/><text x="983" y="920.8" font-size="24" fill="#000">pickup</text><rect x="924" y="934.4" width="46" height="45.5" fill="#f2f2f2"/><circle cx="946.8" cy="957.6999999999999" r="6.2" fill="#A58AFF"/><text x="983" y="966.8" font-size="24" fill="#000">subcompact</text><rect x="924" y="980.4" width="46" height="45.5" fill="#f2f2f2"/><circle cx="946.8" cy="1003.6999999999999" r="6.2" fill="#FB61D7"/><text x="983" y="1012.8" font-size="24" fill="#000">suv</text><rect x="1309.4" y="371.4" width="531.5" height="331.80000000000007" fill="#ebebeb"/><line x1="1324.2" y1="371.4" x2="1324.2" y2="703.2" stroke="#fff" stroke-width="0.7" opacity="0.8"/><line x1="1413.8" y1="371.4" x2="1413.8" y2="703.2" stroke="#fff" stroke-width="0.7" opacity="0.8"/><line x1="1503.4" y1="371.4" x2="1503.4" y2="703.2" stroke="#fff" stroke-width="0.7" opacity="0.8"/><line x1="1593.0" y1="371.4" x2="1593.0" y2="703.2" stroke="#fff" stroke-width="0.7" opacity="0.8"/><line x1="1682.6" y1="371.4" x2="1682.6" y2="703.2" stroke="#fff" stroke-width="0.7" opacity="0.8"/><line x1="1772.2" y1="371.4" x2="1772.2" y2="703.2" stroke="#fff" stroke-width="0.7" opacity="0.8"/><line x1="1309.4" y1="660.0" x2="1840.9" y2="660.0" stroke="#fff" stroke-width="0.7" opacity="0.8"/><line x1="1309.4" y1="565.8000000000001" x2="1840.9" y2="565.8000000000001" stroke="#fff" stroke-width="0.7" opacity="0.8"/><line x1="1309.4" y1="471.6" x2="1840.9" y2="471.6" stroke="#fff" stroke-width="0.7" opacity="0.8"/><line x1="1309.4" y1="377.40000000000003" x2="1840.9" y2="377.40000000000003" stroke="#fff" stroke-width="0.7" opacity="0.8"/><line x1="1369.0" y1="371.4" x2="1369.0" y2="703.2" stroke="#fff" stroke-width="1.6"/><line x1="1369.0" y1="703.2" x2="1369.0" y2="706.2" stroke="#555" stroke-width="1"/><text x="1369.0" y="715.3" font-size="8.6" fill="#4d4d4d" text-anchor="middle">2</text><line x1="1458.6" y1="371.4" x2="1458.6" y2="703.2" stroke="#fff" stroke-width="1.6"/><line x1="1458.6" y1="703.2" x2="1458.6" y2="706.2" stroke="#555" stroke-width="1"/><text x="1458.6" y="715.3" font-size="8.6" fill="#4d4d4d" text-anchor="middle">3</text><line x1="1548.2" y1="371.4" x2="1548.2" y2="703.2" stroke="#fff" stroke-width="1.6"/><line x1="1548.2" y1="703.2" x2="1548.2" y2="706.2" stroke="#555" stroke-width="1"/><text x="1548.2" y="715.3" font-size="8.6" fill="#4d4d4d" text-anchor="middle">4</text><line x1="1637.8" y1="371.4" x2="1637.8" y2="703.2" stroke="#fff" stroke-width="1.6"/><line x1="1637.8" y1="703.2" x2="1637.8" y2="706.2" stroke="#555" stroke-width="1"/><text x="1637.8" y="715.3" font-size="8.6" fill="#4d4d4d" text-anchor="middle">5</text><line x1="1727.4" y1="371.4" x2="1727.4" y2="703.2" stroke="#fff" stroke-width="1.6"/><line x1="1727.4" y1="703.2" x2="1727.4" y2="706.2" stroke="#555" stroke-width="1"/><text x="1727.4" y="715.3" font-size="8.6" fill="#4d4d4d" text-anchor="middle">6</text><line x1="1817.0" y1="371.4" x2="1817.0" y2="703.2" stroke="#fff" stroke-width="1.6"/><line x1="1817.0" y1="703.2" x2="1817.0" y2="706.2" stroke="#555" stroke-width="1"/><text x="1817.0" y="715.3" font-size="8.6" fill="#4d4d4d" text-anchor="middle">7</text><line x1="1309.4" y1="612.9000000000001" x2="1840.9" y2="612.9000000000001" stroke="#fff" stroke-width="1.6"/><line x1="1305.5" y1="612.9000000000001" x2="1309.4" y2="612.9000000000001" stroke="#555" stroke-width="1"/><text x="1303.8" y="616.0000000000001" font-size="8.6" fill="#4d4d4d" text-anchor="end">20</text><line x1="1309.4" y1="518.7" x2="1840.9" y2="518.7" stroke="#fff" stroke-width="1.6"/><line x1="1305.5" y1="518.7" x2="1309.4" y2="518.7" stroke="#555" stroke-width="1"/><text x="1303.8" y="521.8000000000001" font-size="8.6" fill="#4d4d4d" text-anchor="end">30</text><line x1="1309.4" y1="424.50000000000006" x2="1840.9" y2="424.50000000000006" stroke="#fff" stroke-width="1.6"/><line x1="1305.5" y1="424.50000000000006" x2="1309.4" y2="424.50000000000006" stroke="#555" stroke-width="1"/><text x="1303.8" y="427.6000000000001" font-size="8.6" fill="#4d4d4d" text-anchor="end">40</text><circle cx="1700.5" cy="556.4" r="2.6" fill="#F8766D"/><circle cx="1700.5" cy="584.6" r="2.6" fill="#F8766D"/><circle cx="1745.3" cy="556.4" r="2.6" fill="#F8766D"/><circle cx="1745.3" cy="565.8" r="2.6" fill="#F8766D"/><circle cx="1817.0" cy="575.2" r="2.6" fill="#F8766D"/><circle cx="1351.1" cy="452.8" r="2.6" fill="#C49A00"/><circle cx="1351.1" cy="471.6" r="2.6" fill="#C49A00"/><circle cx="1351.1" cy="490.4" r="2.6" fill="#C49A00"/><circle cx="1351.1" cy="518.7" r="2.6" fill="#C49A00"/><circle cx="1351.1" cy="556.4" r="2.6" fill="#C49A00"/><circle cx="1351.1" cy="565.8" r="2.6" fill="#C49A00"/><circle cx="1369.0" cy="509.3" r="2.6" fill="#C49A00"/><circle cx="1369.0" cy="518.7" r="2.6" fill="#C49A00"/><circle cx="1386.9" cy="528.1" r="2.6" fill="#C49A00"/><circle cx="1386.9" cy="547.0" r="2.6" fill="#C49A00"/><circle cx="1404.8" cy="509.3" r="2.6" fill="#C49A00"/><circle cx="1404.8" cy="528.1" r="2.6" fill="#C49A00"/><circle cx="1404.8" cy="547.0" r="2.6" fill="#C49A00"/><circle cx="1413.8" cy="547.0" r="2.6" fill="#C49A00"/><circle cx="1413.8" cy="565.8" r="2.6" fill="#C49A00"/><circle cx="1440.7" cy="565.8" r="2.6" fill="#C49A00"/><circle cx="1440.7" cy="575.2" r="2.6" fill="#C49A00"/><circle cx="1440.7" cy="584.6" r="2.6" fill="#C49A00"/><circle cx="1458.6" cy="556.4" r="2.6" fill="#C49A00"/><circle cx="1467.6" cy="547.0" r="2.6" fill="#C49A00"/><circle cx="1485.5" cy="547.0" r="2.6" fill="#C49A00"/><circle cx="1351.1" cy="528.1" r="2.6" fill="#53B400"/><circle cx="1369.0" cy="528.1" r="2.6" fill="#53B400"/><circle cx="1369.0" cy="537.5" r="2.6" fill="#53B400"/><circle cx="1404.8" cy="518.7" r="2.6" fill="#53B400"/><circle cx="1404.8" cy="556.4" r="2.6" fill="#53B400"/><circle cx="1413.8" cy="499.9" r="2.6" fill="#53B400"/><circle cx="1413.8" cy="509.3" r="2.6" fill="#53B400"/><circle cx="1440.7" cy="556.4" r="2.6" fill="#53B400"/><circle cx="1458.6" cy="565.8" r="2.6" fill="#53B400"/><circle cx="1467.6" cy="556.4" r="2.6" fill="#53B400"/><circle cx="1467.6" cy="565.8" r="2.6" fill="#53B400"/><circle cx="1485.5" cy="537.5" r="2.6" fill="#53B400"/><circle cx="1503.4" cy="528.1" r="2.6" fill="#53B400"/><circle cx="1503.4" cy="537.5" r="2.6" fill="#53B400"/><circle cx="1503.4" cy="547.0" r="2.6" fill="#53B400"/><circle cx="1503.4" cy="556.4" r="2.6" fill="#53B400"/><circle cx="1503.4" cy="565.8" r="2.6" fill="#53B400"/><circle cx="1512.4" cy="556.4" r="2.6" fill="#53B400"/><circle cx="1530.3" cy="537.5" r="2.6" fill="#53B400"/><circle cx="1530.3" cy="547.0" r="2.6" fill="#53B400"/><circle cx="1530.3" cy="556.4" r="2.6" fill="#53B400"/><circle cx="1566.1" cy="584.6" r="2.6" fill="#53B400"/><circle cx="1664.7" cy="565.8" r="2.6" fill="#53B400"/><circle cx="1404.8" cy="575.2" r="2.6" fill="#00C094"/><circle cx="1458.6" cy="575.2" r="2.6" fill="#00C094"/><circle cx="1485.5" cy="575.2" r="2.6" fill="#00C094"/><circle cx="1485.5" cy="594.1" r="2.6" fill="#00C094"/><circle cx="1530.3" cy="584.6" r="2.6" fill="#00C094"/><circle cx="1530.3" cy="594.1" r="2.6" fill="#00C094"/><circle cx="1530.3" cy="603.5" r="2.6" fill="#00C094"/><circle cx="1548.2" cy="584.6" r="2.6" fill="#00C094"/><circle cx="1431.7" cy="594.1" r="2.6" fill="#00B6EB"/><circle cx="1431.7" cy="612.9" r="2.6" fill="#00B6EB"/><circle cx="1494.4" cy="622.3" r="2.6" fill="#00B6EB"/><circle cx="1494.4" cy="641.2" r="2.6" fill="#00B6EB"/><circle cx="1521.3" cy="631.7" r="2.6" fill="#00B6EB"/><circle cx="1548.2" cy="612.9" r="2.6" fill="#00B6EB"/><circle cx="1548.2" cy="631.7" r="2.6" fill="#00B6EB"/><circle cx="1566.1" cy="641.2" r="2.6" fill="#00B6EB"/><circle cx="1602.0" cy="641.2" r="2.6" fill="#00B6EB"/><circle cx="1602.0" cy="650.6" r="2.6" fill="#00B6EB"/><circle cx="1610.9" cy="650.6" r="2.6" fill="#00B6EB"/><circle cx="1655.7" cy="641.2" r="2.6" fill="#00B6EB"/><circle cx="1655.7" cy="650.6" r="2.6" fill="#00B6EB"/><circle cx="1655.7" cy="660.0" r="2.6" fill="#00B6EB"/><circle cx="1673.6" cy="660.0" r="2.6" fill="#00B6EB"/><circle cx="1700.5" cy="641.2" r="2.6" fill="#00B6EB"/><circle cx="1718.4" cy="660.0" r="2.6" fill="#00B6EB"/><circle cx="1333.2" cy="490.4" r="2.6" fill="#A58AFF"/><circle cx="1333.2" cy="499.9" r="2.6" fill="#A58AFF"/><circle cx="1333.2" cy="528.1" r="2.6" fill="#A58AFF"/><circle cx="1360.0" cy="386.8" r="2.6" fill="#A58AFF"/><circle cx="1360.0" cy="415.1" r="2.6" fill="#A58AFF"/><circle cx="1351.1" cy="462.2" r="2.6" fill="#A58AFF"/><circle cx="1351.1" cy="481.0" r="2.6" fill="#A58AFF"/><circle cx="1369.0" cy="547.0" r="2.6" fill="#A58AFF"/><circle cx="1369.0" cy="556.4" r="2.6" fill="#A58AFF"/><circle cx="1386.9" cy="556.4" r="2.6" fill="#A58AFF"/><circle cx="1413.8" cy="528.1" r="2.6" fill="#A58AFF"/><circle cx="1413.8" cy="537.5" r="2.6" fill="#A58AFF"/><circle cx="1413.8" cy="556.4" r="2.6" fill="#A58AFF"/><circle cx="1431.7" cy="575.2" r="2.6" fill="#A58AFF"/><circle cx="1530.3" cy="565.8" r="2.6" fill="#A58AFF"/><circle cx="1548.2" cy="556.4" r="2.6" fill="#A58AFF"/><circle cx="1548.2" cy="575.2" r="2.6" fill="#A58AFF"/><circle cx="1602.0" cy="584.6" r="2.6" fill="#A58AFF"/><circle cx="1602.0" cy="594.1" r="2.6" fill="#A58AFF"/><circle cx="1602.0" cy="603.5" r="2.6" fill="#A58AFF"/><circle cx="1673.6" cy="612.9" r="2.6" fill="#A58AFF"/><circle cx="1413.8" cy="575.2" r="2.6" fill="#FB61D7"/><circle cx="1413.8" cy="584.6" r="2.6" fill="#FB61D7"/><circle cx="1458.6" cy="594.1" r="2.6" fill="#FB61D7"/><circle cx="1485.5" cy="641.2" r="2.6" fill="#FB61D7"/><circle cx="1521.3" cy="622.3" r="2.6" fill="#FB61D7"/><circle cx="1539.2" cy="641.2" r="2.6" fill="#FB61D7"/><circle cx="1548.2" cy="622.3" r="2.6" fill="#FB61D7"/><circle cx="1548.2" cy="641.2" r="2.6" fill="#FB61D7"/><circle cx="1548.2" cy="660.0" r="2.6" fill="#FB61D7"/><circle cx="1566.1" cy="631.7" r="2.6" fill="#FB61D7"/><circle cx="1584.0" cy="631.7" r="2.6" fill="#FB61D7"/><circle cx="1602.0" cy="622.3" r="2.6" fill="#FB61D7"/><circle cx="1602.0" cy="660.0" r="2.6" fill="#FB61D7"/><circle cx="1610.9" cy="622.3" r="2.6" fill="#FB61D7"/><circle cx="1610.9" cy="641.2" r="2.6" fill="#FB61D7"/><circle cx="1610.9" cy="660.0" r="2.6" fill="#FB61D7"/><circle cx="1610.9" cy="688.3" r="2.6" fill="#FB61D7"/><circle cx="1637.8" cy="641.2" r="2.6" fill="#FB61D7"/><circle cx="1664.7" cy="612.9" r="2.6" fill="#FB61D7"/><circle cx="1664.7" cy="622.3" r="2.6" fill="#FB61D7"/><circle cx="1664.7" cy="660.0" r="2.6" fill="#FB61D7"/><circle cx="1664.7" cy="669.4" r="2.6" fill="#FB61D7"/><circle cx="1673.6" cy="631.7" r="2.6" fill="#FB61D7"/><circle cx="1673.6" cy="641.2" r="2.6" fill="#FB61D7"/><circle cx="1673.6" cy="650.6" r="2.6" fill="#FB61D7"/><circle cx="1691.6" cy="631.7" r="2.6" fill="#FB61D7"/><circle cx="1700.5" cy="631.7" r="2.6" fill="#FB61D7"/><circle cx="1700.5" cy="660.0" r="2.6" fill="#FB61D7"/><circle cx="1727.4" cy="641.2" r="2.6" fill="#FB61D7"/><circle cx="1736.4" cy="669.4" r="2.6" fill="#FB61D7"/><circle cx="1772.2" cy="641.2" r="2.6" fill="#FB61D7"/><text x="1575" y="728.3" font-size="11" fill="#000" text-anchor="middle">displ</text><text transform="translate(1287.8,537.6) rotate(-90)" font-size="11" fill="#000" text-anchor="middle">hwy</text><text x="1858" y="476.6" font-size="11" fill="#000">class</text><rect x="1858" y="483.4" width="18" height="124" fill="#f2f2f2"/><circle cx="1866.7" cy="492.4" r="2.5" fill="#F8766D"/><text x="1881.6" y="495.6" font-size="8.8" fill="#000">2seater</text><circle cx="1866.7" cy="510.1" r="2.5" fill="#C49A00"/><text x="1881.6" y="513.4" font-size="8.8" fill="#000">compact</text><circle cx="1866.7" cy="527.9" r="2.5" fill="#53B400"/><text x="1881.6" y="531.1" font-size="8.8" fill="#000">midsize</text><circle cx="1866.7" cy="545.6" r="2.5" fill="#00C094"/><text x="1881.6" y="548.9" font-size="8.8" fill="#000">minivan</text><circle cx="1866.7" cy="563.4" r="2.5" fill="#00B6EB"/><text x="1881.6" y="566.6" font-size="8.8" fill="#000">pickup</text><circle cx="1866.7" cy="581.1" r="2.5" fill="#A58AFF"/><text x="1881.6" y="584.4" font-size="8.8" fill="#000">subcompact</text><circle cx="1866.7" cy="598.9" r="2.5" fill="#FB61D7"/><text x="1881.6" y="602.1" font-size="8.8" fill="#000">suv</text>
</svg>
<div style="position:absolute;left:461.7px;top:15.0px;font-family:'Liberation Sans';font-size:20.3px;font-weight:400;letter-spacing:1.21px;line-height:20.3px;color:#7b7b7b;white-space:pre">Go to file/function</div><div style="position:absolute;left:807.0px;top:13.0px;font-family:'Liberation Sans';font-size:23.5px;font-weight:400;letter-spacing:0.28px;line-height:23.5px;color:#111;white-space:pre">Addins</div><div style="position:absolute;left:1959.6px;top:14.0px;font-family:'Liberation Sans';font-size:23.2px;font-weight:400;letter-spacing:0.12px;line-height:23.2px;color:#333;white-space:pre">Project: (None)</div><div style="position:absolute;left:71.3px;top:72.0px;font-family:'Liberation Sans';font-size:24px;font-weight:400;letter-spacing:0.58px;line-height:24px;color:#111;white-space:pre">mpg.qmd</div><div style="position:absolute;left:273.0px;top:119.0px;font-family:'Liberation Sans';font-size:23.2px;font-weight:400;letter-spacing:-0.25px;line-height:23.2px;color:#111;white-space:pre">Render on Save</div><div style="position:absolute;left:615.8px;top:121.0px;font-family:'Liberation Sans';font-size:23.2px;font-weight:400;letter-spacing:-0.22px;line-height:23.2px;color:#111;white-space:pre">Render</div><div style="position:absolute;left:893.0px;top:119.0px;font-family:'Liberation Sans';font-size:23.2px;font-weight:400;letter-spacing:0.2px;line-height:23.2px;color:#111;white-space:pre">Run</div><div style="position:absolute;left:31.5px;top:165.0px;font-family:'Liberation Sans';font-size:23px;font-weight:400;letter-spacing:0.82px;line-height:23px;color:#111;white-space:pre">Normal</div><div style="position:absolute;left:635.0px;top:166.0px;font-family:'Liberation Sans';font-size:23px;font-weight:400;letter-spacing:0.6px;line-height:23px;color:#111;white-space:pre">Format</div><div style="position:absolute;left:769.0px;top:166.0px;font-family:'Liberation Sans';font-size:23px;font-weight:400;letter-spacing:0.6px;line-height:23px;color:#111;white-space:pre">Insert</div><div style="position:absolute;left:888.7px;top:166.0px;font-family:'Liberation Sans';font-size:23px;font-weight:400;letter-spacing:0.1px;line-height:23px;color:#111;white-space:pre">Reference</div><div style="position:absolute;left:1055.0px;top:166.0px;font-family:'Liberation Sans';font-size:23px;font-weight:400;letter-spacing:0.82px;line-height:23px;color:#111;white-space:pre">Table</div><div style="position:absolute;left:55.4px;top:222.0px;font-family:'Liberation Sans';font-size:41px;font-weight:700;letter-spacing:0.84px;line-height:41px;color:#000;white-space:pre">Miles Per Gallon</div><div style="position:absolute;left:55.5px;top:304.0px;font-family:'Liberation Sans';font-size:26.8px;font-weight:400;letter-spacing:0.78px;line-height:26.8px;color:#000;white-space:pre">Highway MPG: Displacement and vehicle class</div><div style="position:absolute;left:54.6px;top:1105.0px;font-family:'Liberation Sans';font-size:23.2px;font-weight:400;letter-spacing:0.13px;line-height:23.2px;color:#3b4750;white-space:pre">Miles Per Gallon</div><div style="position:absolute;left:1093.9px;top:1105.0px;font-family:'Liberation Sans';font-size:23.2px;font-weight:400;letter-spacing:0.54px;line-height:23.2px;color:#3b4750;white-space:pre">Quarto</div><div style="position:absolute;left:31.5px;top:1161.0px;font-family:'Liberation Sans';font-size:23px;font-weight:400;letter-spacing:0.42px;line-height:23px;color:#111;white-space:pre">Console</div><div style="position:absolute;left:1239.0px;top:73.0px;font-family:'Liberation Sans';font-size:22.8px;font-weight:700;letter-spacing:0.4px;line-height:22.8px;color:#111;white-space:pre">Environment</div><div style="position:absolute;left:1421.0px;top:73.0px;font-family:'Liberation Sans';font-size:22.8px;font-weight:700;letter-spacing:0.63px;line-height:22.8px;color:#111;white-space:pre">History</div><div style="position:absolute;left:1541.9px;top:73.0px;font-family:'Liberation Sans';font-size:22.8px;font-weight:700;letter-spacing:0.19px;line-height:22.8px;color:#111;white-space:pre">Connections</div><div style="position:absolute;left:1723.5px;top:73.0px;font-family:'Liberation Sans';font-size:22.8px;font-weight:700;letter-spacing:1.24px;line-height:22.8px;color:#111;white-space:pre">Tutorial</div><div style="position:absolute;left:1849.8px;top:73.0px;font-family:'Liberation Sans';font-size:22.8px;font-weight:700;letter-spacing:0.49px;line-height:22.8px;color:#111;white-space:pre">Presentation</div><div style="position:absolute;left:1276.0px;top:119.0px;font-family:'Liberation Sans';font-size:23px;font-weight:400;letter-spacing:0.03px;line-height:23px;color:#111;white-space:pre">Present</div><div style="position:absolute;left:1452.0px;top:119.0px;font-family:'Liberation Sans';font-size:23px;font-weight:400;letter-spacing:0.75px;line-height:23px;color:#111;white-space:pre">Print</div><div style="position:absolute;left:1580.7px;top:119.0px;font-family:'Liberation Sans';font-size:23px;font-weight:400;letter-spacing:-0.07px;line-height:23px;color:#111;white-space:pre">Edit</div><div style="position:absolute;left:1958.0px;top:119.0px;font-family:'Liberation Sans';font-size:23px;font-weight:400;letter-spacing:0.5px;line-height:23px;color:#111;white-space:pre">Publish</div><div style="position:absolute;left:1408.0px;top:161.0px;font-family:'Liberation Sans';font-size:23px;font-weight:400;letter-spacing:0.46px;line-height:23px;color:#111;white-space:pre">Miles Per Gallon (2/2)</div><div style="position:absolute;left:1273.9px;top:235.0px;font-family:'Liberation Sans';font-size:46.5px;font-weight:700;line-height:46.5px;color:#222;white-space:pre;transform:scaleX(0.9424);transform-origin:0 0">Miles Per Gallon</div><div style="position:absolute;left:1274.5px;top:304.0px;font-family:'Liberation Sans';font-size:28.5px;font-weight:400;letter-spacing:-0.1px;line-height:28.5px;color:#333;white-space:pre">Highway MPG: Displacement and vehicle class</div><div style="position:absolute;left:1239.4px;top:829.0px;font-family:'Liberation Sans';font-size:22.8px;font-weight:700;letter-spacing:-0.05px;line-height:22.8px;color:#111;white-space:pre">Files</div><div style="position:absolute;left:1330.6px;top:829.0px;font-family:'Liberation Sans';font-size:22.8px;font-weight:700;letter-spacing:0.0px;line-height:22.8px;color:#111;white-space:pre">Plots</div><div style="position:absolute;left:1426.4px;top:829.0px;font-family:'Liberation Sans';font-size:22.8px;font-weight:700;letter-spacing:-0.06px;line-height:22.8px;color:#111;white-space:pre">Packages</div><div style="position:absolute;left:1570.8px;top:829.0px;font-family:'Liberation Sans';font-size:22.8px;font-weight:700;letter-spacing:0.83px;line-height:22.8px;color:#111;white-space:pre">Help</div><div style="position:absolute;left:1661.6px;top:829.0px;font-family:'Liberation Sans';font-size:22.8px;font-weight:700;letter-spacing:0.52px;line-height:22.8px;color:#111;white-space:pre">Viewer</div><div style="position:absolute;left:1232.0px;top:920.0px;font-family:'Liberation Sans';font-size:22.5px;font-weight:400;letter-spacing:-0.34px;line-height:22.5px;color:#222;white-space:pre">R: Motor Trend Car Road Tests</div><div style="position:absolute;left:1591.8px;top:920.0px;font-family:'Liberation Sans';font-size:22px;font-weight:400;letter-spacing:0.35px;line-height:22px;color:#7a7a7a;white-space:pre">Find in Topic</div><div style="position:absolute;left:1240.0px;top:982.0px;font-family:'Liberation Sans';font-size:27px;font-weight:400;letter-spacing:0.19px;line-height:27px;color:#111;white-space:pre">mtcars {datasets}</div><div style="position:absolute;left:1906.9px;top:982.0px;font-family:'Liberation Sans';font-size:27px;font-weight:400;letter-spacing:0.1px;line-height:27px;color:#111;white-space:pre">R Documentation</div><div style="position:absolute;left:1233.7px;top:1060.0px;font-family:'Liberation Sans';font-size:49.5px;font-weight:400;line-height:49.5px;color:#000;white-space:pre;transform:scaleX(0.9746);transform-origin:0 0">Motor Trend Car Road Tests</div><div style="position:absolute;left:1234.6px;top:1157.0px;font-family:'Liberation Sans';font-size:31.7px;font-weight:700;letter-spacing:-0.11px;line-height:31.7px;color:#575757;white-space:pre">Description</div>
</body></html>
